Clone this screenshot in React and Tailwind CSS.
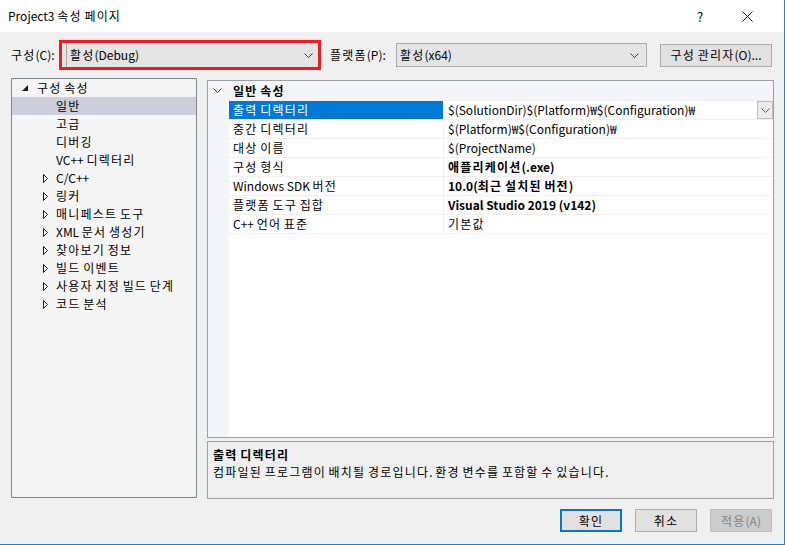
import React from "react";

const treeItems = [
  { label: "구성 속성", level: 0, open: true },
  { label: "일반", level: 1, selected: true },
  { label: "고급", level: 1 },
  { label: "디버깅", level: 1 },
  { label: "VC++ 디렉터리", level: 1 },
  { label: "C/C++", level: 1, arrow: true },
  { label: "링커", level: 1, arrow: true },
  { label: "매니페스트 도구", level: 1, arrow: true },
  { label: "XML 문서 생성기", level: 1, arrow: true },
  { label: "찾아보기 정보", level: 1, arrow: true },
  { label: "빌드 이벤트", level: 1, arrow: true },
  { label: "사용자 지정 빌드 단계", level: 1, arrow: true },
  { label: "코드 분석", level: 1, arrow: true },
];

const props = [
  { name: "출력 디렉터리", value: "$(SolutionDir)$(Platform)₩$(Configuration)₩", selected: true },
  { name: "중간 디렉터리", value: "$(Platform)₩$(Configuration)₩" },
  { name: "대상 이름", value: "$(ProjectName)" },
  { name: "구성 형식", value: "애플리케이션(.exe)", bold: true },
  { name: "Windows SDK 버전", value: "10.0(최근 설치된 버전)", bold: true },
  { name: "플랫폼 도구 집합", value: "Visual Studio 2019 (v142)", bold: true },
  { name: "C++ 언어 표준", value: "기본값" },
];

// hangul in the original font runs wider, so give hangul runs a bit of tracking
function T({ children }) {
  const parts = String(children).split(/([\uAC00-\uD7A3]+)/);
  return (
    <span className="whitespace-pre">
      {parts.map((part, i) =>
        /[\uAC00-\uD7A3]/.test(part) ? (
          <span key={i} className="tracking-[1.2px]">
            {part}
          </span>
        ) : (
          <React.Fragment key={i}>{part}</React.Fragment>
        )
      )}
    </span>
  );
}

function Chevron({ className = "" }) {
  return (
    <svg width="9" height="5" viewBox="0 0 9 5" className={className}>
      <polyline points="0.5,0.5 4.5,4.5 8.5,0.5" fill="none" stroke="currentColor" strokeWidth="1" />
    </svg>
  );
}

function TreeRow({ item }) {
  const base = "flex h-[18px] items-center whitespace-nowrap";
  const bg = item.selected ? "bg-[#cccedb]" : "";
  if (item.level === 0) {
    return (
      <div className={`${base} ${bg} pl-[10px]`}>
        <svg width="6" height="6" viewBox="0 0 6 6">
          <polygon points="6,0 6,6 0,6" fill="#1e1e1e" />
        </svg>
        <span className="ml-[9px]"><T>{item.label}</T></span>
      </div>
    );
  }
  if (item.arrow) {
    return (
      <div className={`${base} ${bg} pl-[31px]`}>
        <svg width="5" height="9" viewBox="0 0 5 9">
          <polygon points="0.5,0.5 4.5,4.5 0.5,8.5" fill="none" stroke="#1e1e1e" strokeWidth="1" />
        </svg>
        <span className="ml-[8px]"><T>{item.label}</T></span>
      </div>
    );
  }
  return (
    <div className={`${base} ${bg} pl-[44px]`}>
      <span><T>{item.label}</T></span>
    </div>
  );
}

export default function App() {
  return (
    <div className="flex h-[545px] w-[785px] flex-col overflow-hidden border-r border-b border-[#1883d7] bg-[#f0f0f0] font-['Noto_Sans_CJK_KR',sans-serif] text-[12px] leading-none text-[#000]">
      {/* title bar */}
      <div className="flex h-[32px] shrink-0 items-center bg-white pl-[8px]">
        <span className="flex-1"><T>Project3 속성 페이지</T></span>
        <span className="w-[20px] text-center text-[13px]">?</span>
        <div className="flex w-[74px] justify-center">
          <svg width="11" height="11" viewBox="0 0 11 11">
            <path d="M0.5 0.5 L10.5 10.5 M10.5 0.5 L0.5 10.5" stroke="#111" strokeWidth="1" />
          </svg>
        </div>
      </div>

      {/* config row */}
      <div className="mt-[8px] flex h-[30px] shrink-0 items-center">
        <span className="ml-[11px] w-[48px] whitespace-nowrap"><T>구성(C):</T></span>
        <div className="flex h-[30px] w-[262px] items-center border-[3px] border-[#ed1c24] bg-[#e5e5e5]">
          <div className="ml-[4px] flex h-full flex-1 items-center border-l border-[#a8a8a8] pl-[3px]">
            <span className="flex-1"><T>활성(Debug)</T></span>
            <Chevron className="mr-[5px] text-[#444]" />
          </div>
        </div>
        <span className="ml-[9px] w-[66px] whitespace-nowrap"><T>플랫폼(P):</T></span>
        <div className="flex h-[24px] w-[251px] items-center border border-[#acacac] bg-[#e5e5e5] pl-[3px]">
          <span className="flex-1"><T>활성(x64)</T></span>
          <Chevron className="mr-[7px] text-[#444]" />
        </div>
        <button className="ml-[13px] flex h-[23px] w-[112px] items-center justify-center whitespace-nowrap border border-[#adadad] bg-[#e1e1e1]">
          <T>구성 관리자(O)...</T>
        </button>
      </div>

      {/* main area */}
      <div className="mt-[8px] flex h-[421px] shrink-0 pl-[11px]">
        <div className="h-[420px] w-[186px] border border-[#828790] bg-[#f5f5f5]">
          {treeItems.map((item) => (
            <TreeRow key={item.label} item={item} />
          ))}
        </div>

        <div className="ml-[10px] flex w-[567px] flex-col pt-[2px]">
          <div className="flex h-[358px] flex-col border border-[#a0a0a0] bg-white">
            <div className="flex h-[19px] items-center bg-[#f3f5f8] font-bold">
              <Chevron className="ml-[5px] text-[#333]" />
              <span className="ml-[11px]"><T>일반 속성</T></span>
            </div>
            <div className="flex flex-1">
              <div className="w-[21px] bg-[#f3f5f8]" />
              <div className="flex-1">
                {props.map((p) => (
                  <div key={p.name} className="flex h-[19px] border-t border-[#f0f0f0]">
                    <div
                      className={
                        p.selected
                          ? "flex w-[214px] items-center whitespace-nowrap bg-[#0078d7] pl-[4px] text-white"
                          : "flex w-[214px] items-center whitespace-nowrap pl-[4px]"
                      }
                    >
                      <T>{p.name}</T>
                    </div>
                    <div className="flex flex-1 items-center border-l border-[#f0f0f0] pl-[4px]">
                      <span className={p.bold ? "flex-1 whitespace-nowrap font-bold" : "flex-1 whitespace-nowrap"}>
                        <T>{p.value}</T>
                      </span>
                      {p.selected && (
                        <div className="flex h-[18px] w-[16px] items-center justify-center border border-[#bdbdbd] bg-[#ececec]">
                          <Chevron className="text-[#666]" />
                        </div>
                      )}
                    </div>
                  </div>
                ))}
                <div className="border-t border-[#f0f0f0]" />
              </div>
            </div>
          </div>

          <div className="mt-[3px] flex h-[58px] flex-col border border-[#a0a0a0] bg-[#f0f0f0] pl-[5px] pt-[4px]">
            <span className="h-[17px] font-bold leading-[17px]"><T>출력 디렉터리</T></span>
            <span className="h-[17px] whitespace-nowrap leading-[17px]">
              <T>컴파일된 프로그램이 배치될 경로입니다. 환경 변수를 포함할 수 있습니다.</T>
            </span>
          </div>
        </div>
      </div>

      {/* buttons */}
      <div className="mt-[10px] flex justify-end gap-[13px] pr-[12px]">
        <button className="flex h-[23px] w-[62px] items-center justify-center border-2 border-[#0078d7] bg-[#e1e1e1]">
          <T>확인</T>
        </button>
        <button className="flex h-[23px] w-[62px] items-center justify-center border border-[#adadad] bg-[#e1e1e1]">
          <T>취소</T>
        </button>
        <button className="flex h-[23px] w-[62px] items-center justify-center border border-[#bfbfbf] bg-[#cccccc] text-[#838383]">
          <T>적용(A)</T>
        </button>
      </div>
    </div>
  );
}
